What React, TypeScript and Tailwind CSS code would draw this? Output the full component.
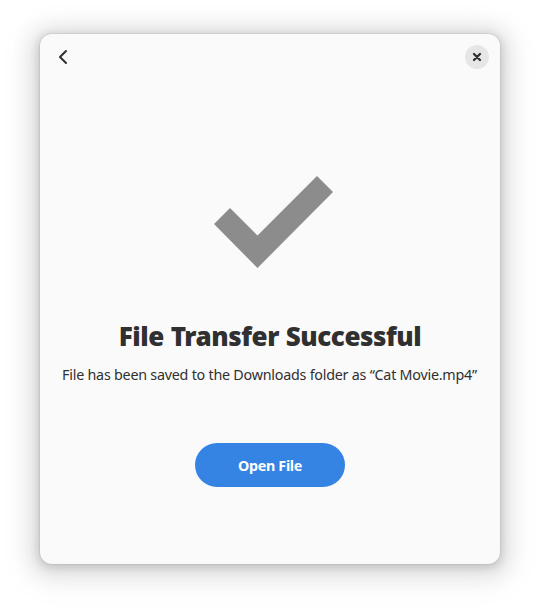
export default function App() {
  return (
    <main className="flex h-[610px] w-[540px] items-start justify-center overflow-hidden bg-white pt-[34px] font-['Noto_Sans',sans-serif] text-[#303030]">
      <section className="flex h-[530px] w-[460px] flex-col rounded-[12px] bg-[#fafafa] shadow-[0_2px_8px_2px_rgba(0,0,0,0.13),0_3px_20px_10px_rgba(0,0,0,0.09),0_6px_32px_16px_rgba(0,0,0,0.04),0_0_0_1px_rgba(0,0,0,0.05)]">
        <header className="flex h-[46px] items-center justify-between pr-[11px] pl-[15px]">
          <button aria-label="Back">
            <svg className="block" width="16" height="16" viewBox="0 0 16 16" fill="none" stroke="currentColor" strokeWidth="2" strokeLinecap="round" strokeLinejoin="round">
              <path d="M11 2 5 8l6 6" />
            </svg>
          </button>
          <button aria-label="Close" className="flex size-6 items-center justify-center rounded-full bg-[#e6e6e6]">
            <svg className="block" width="16" height="16" viewBox="0 0 16 16" fill="none" stroke="currentColor" strokeWidth="2.300" strokeLinecap="round">
              <path d="m5 5 6 6m0-6-6 6" />
            </svg>
          </button>
        </header>
        <div className="flex flex-1 flex-col items-center pt-[96px]">
          <svg className="ml-[7px] block" width="119" height="92" viewBox="0 0 119 92" fill="#8c8c8c">
            <path d="M0 48 16 32 43.500 59.500 103 0l16 16L43.500 92Z" />
          </svg>
          <h1 className="mt-[48px] mb-px text-[26px] leading-[40px] font-black tracking-[-0.450px] [word-spacing:0.500px] whitespace-nowrap">File Transfer Successful</h1>
          <p className="mt-[8px] mr-[1px] text-[14.300px] leading-[20px] tracking-[-0.230px] whitespace-nowrap">File has been saved to the Downloads folder as “Cat Movie.mp4”</p>
          <button className="mt-[58px] h-[44px] w-[150px] rounded-full bg-[#3584e4] pt-[2px] text-[14.300px] font-bold tracking-[-0.300px] text-white">Open File</button>
        </div>
      </section>
    </main>
  );
}
